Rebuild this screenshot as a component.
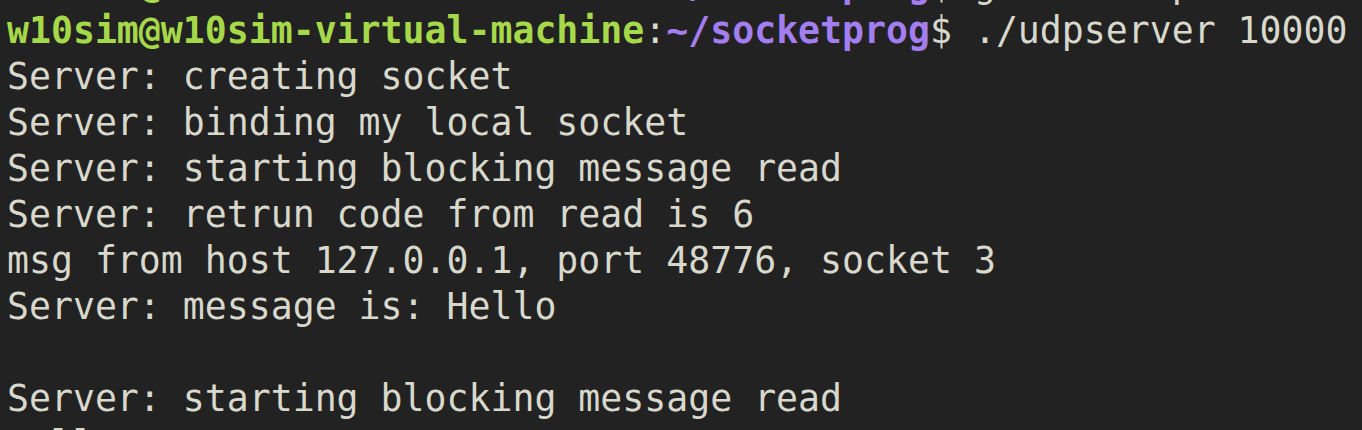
const prompt = (cmd) => (
  <div className="whitespace-pre">
    <span className="font-bold text-[#a6d94a]">w10sim@w10sim-virtual-machine</span>
    <span>:</span>
    <span className="font-bold text-[#a27ef0]">~/socketprog</span>
    <span>$ {cmd}</span>
  </div>
);

const lines = [
  'Server: creating socket',
  'Server: binding my local socket',
  'Server: starting blocking message read',
  'Server: retrun code from read is 6',
  'msg from host 127.0.0.1, port 48776, socket 3',
  'Server: message is: Hello',
  '',
  'Server: starting blocking message read',
  'Hello',
];

export default function App() {
  return (
    <div className="h-[430px] w-[1362px] overflow-hidden bg-[#222222] pl-[7px] text-[#d8d8cc] font-['DejaVu_Sans_Mono',monospace] text-[36.5px] leading-[46px]">
      <div className="-mt-[38px]">
        {prompt('gcc -o udpserver udpserver.c')}
        {prompt('./udpserver 10000')}
        {lines.map((l, i) => (
          <div key={i} className="whitespace-pre h-[46px]">
            {l}
          </div>
        ))}
      </div>
    </div>
  );
}
